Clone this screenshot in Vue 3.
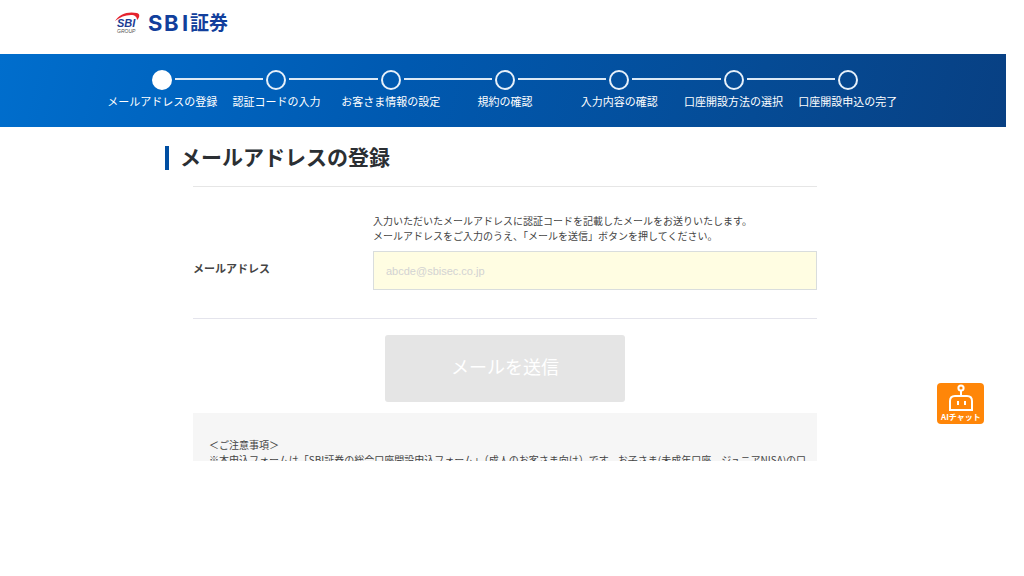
<script setup>
import { ref } from 'vue'

const steps = [
  'メールアドレスの登録',
  '認証コードの入力',
  'お客さま情報の設定',
  '規約の確認',
  '入力内容の確認',
  '口座開設方法の選択',
  '口座開設申込の完了',
]
const current = 0
const email = ref('')
</script>

<template>
  <div class="viewport">
    <header class="header">
      <a class="logo" href="#" aria-label="SBI証券">
        <svg width="116" height="30" viewBox="0 0 116 30">
          <path d="M0 10C4 3 13 0 22 2C25 3 25 6 22 9C22 6 20 4 16 4C10 4 5 6 0 10Z" fill="#e5232e" />
          <text class="mark" x="2" y="16">SBI</text>
          <text class="group" x="2" y="22">GROUP</text>
          <text class="name-latin" x="33 49 67" y="20">SBI</text>
          <text class="name" x="75 94" y="19">証券</text>
        </svg>
      </a>
    </header>

    <nav class="banner" aria-label="お申込の流れ">
      <ol class="steps">
        <li v-for="(step, i) in steps" :key="step" class="step">
          <span class="dot" :class="{ active: i === current }"></span>
          <span class="step-label">{{ step }}</span>
        </li>
      </ol>
    </nav>

    <main class="main">
      <h1 class="title">メールアドレスの登録</h1>
      <form class="form" @submit.prevent>
        <div class="row">
          <label class="label" for="email">メールアドレス</label>
          <div class="field">
            <p class="guide">
              入力いただいたメールアドレスに認証コードを記載したメールをお送りいたします。<br />
              メールアドレスをご入力のうえ、「メールを送信」ボタンを押してください。
            </p>
            <input id="email" v-model="email" class="input" type="email" placeholder="abcde@sbisec.co.jp" />
          </div>
        </div>
        <button class="submit" type="submit" :disabled="!email">メールを送信</button>
        <section class="notice">
          <p>＜ご注意事項＞</p>
          <p>※本申込フォームは「SBI証券の総合口座開設申込フォーム」（成人のお客さま向け）です。お子さま(未成年口座、ジュニアNISA)の口</p>
        </section>
      </form>
    </main>

    <button class="chat" type="button" aria-label="AIチャット">
      <svg width="47" height="41" viewBox="0 0 47 41">
        <g fill="none" stroke="#fff" stroke-width="2">
          <circle cx="24" cy="5" r="2.6" />
          <path d="M24 8V13" />
          <path d="M13 27V18Q13 13 18 13H30Q35 13 35 18V27Z" />
          <path d="M21 18V22M28 18V22" />
        </g>
        <text class="chat-text" x="4" y="37">AIチャット</text>
      </svg>
    </button>
  </div>
</template>

<style>
body {
  margin: 0;
  background: #fff;
}
</style>

<style scoped>
.viewport {
  position: relative;
  height: 80vh;
  margin-right: 18px;
  overflow: hidden;
  color: #444;
  font-family: "Noto Sans CJK JP", "Liberation Sans", sans-serif;
  font-size: 10px;
  line-height: 15px;
}
.header {
  height: 54px;
  padding-left: 115px;
  box-sizing: border-box;
}
.logo {
  display: block;
  width: 116px;
  padding-top: 11px;
}
.logo svg {
  display: block;
  overflow: visible;
}
.mark {
  font: italic 700 11px "Liberation Sans", sans-serif;
  fill: #1c3c94;
}
.group {
  font: italic 5px "Liberation Sans", sans-serif;
  fill: #555;
}
.name,
.name-latin {
  font: 700 19px "Noto Sans CJK JP", sans-serif;
  fill: #123f9c;
}
.name-latin {
  font: 700 22px Inter, sans-serif;
}
.banner {
  padding: 16px 0 17px 4px;
  background: linear-gradient(105deg, #006ecd 0%, #0059b0 40%, #054b95 75%, #084083 100%);
}
.steps {
  display: grid;
  grid-template-columns: repeat(7, 1fr);
  max-width: 800px;
  margin: 0 auto;
  padding: 0;
  list-style: none;
}
.step {
  position: relative;
  display: flex;
  flex-direction: column;
  align-items: center;
  gap: 3px;
  padding-bottom: 1px;
}
.step + .step::before {
  content: "";
  position: absolute;
  top: 8px;
  right: calc(50% + 13px);
  width: calc(100% - 26px);
  height: 2px;
  background: #dce9f6;
}
.dot {
  width: 20px;
  height: 20px;
  box-sizing: border-box;
  border: 2px solid #e6f0fa;
  border-radius: 50%;
}
.dot.active {
  border-color: #fff;
  background: #fff;
}
.step-label {
  color: #fff;
  font-size: 11px;
  line-height: 16px;
  white-space: nowrap;
}
.main {
  max-width: 680px;
  margin: 0 auto;
  padding: 19px 0 0 4px;
}
.title {
  height: 24px;
  margin: 0 0 16px;
  padding-left: 11px;
  border-left: 4px solid #004ea2;
  color: #2b2f33;
  font-size: 21px;
  line-height: 20px;
}
.form {
  margin: 0 28px;
}
.row {
  display: flex;
  align-items: center;
  padding: 26px 0 28px;
  border-top: 1px solid #e6e6e6;
  border-bottom: 1px solid #e4e4ec;
}
.label {
  width: 180px;
  padding-top: 34px;
  font-size: 11px;
  font-weight: 700;
}
.field {
  flex: 1;
  min-width: 0;
}
.guide {
  margin: 0 0 8px;
}
.input {
  display: block;
  width: 100%;
  height: 39px;
  box-sizing: border-box;
  padding: 0 12px;
  border: 1px solid #d9dddd;
  border-radius: 0;
  background: #fffde2;
  color: #333;
  font: 11px "Liberation Sans", sans-serif;
}
.input::placeholder {
  color: #d3d3d3;
}
.submit {
  display: block;
  width: 240px;
  height: 67px;
  margin: 16px auto 11px;
  padding: 0 0 6px;
  border: 0;
  border-radius: 3px;
  background: #e5e5e5;
  color: #fff;
  font: 18px "Noto Sans CJK JP", sans-serif;
}
.notice {
  padding: 24px 16px;
  background: #f6f6f6;
}
.notice p {
  margin: 0;
  white-space: nowrap;
}
.chat {
  position: absolute;
  right: 22px;
  bottom: 37px;
  width: 47px;
  height: 41px;
  padding: 0;
  border: 0;
  border-radius: 4px;
  background: #ff8608;
}
.chat svg {
  display: block;
}
.chat-text {
  font: 700 8px "Noto Sans CJK JP", sans-serif;
  fill: #fff;
}
</style>
